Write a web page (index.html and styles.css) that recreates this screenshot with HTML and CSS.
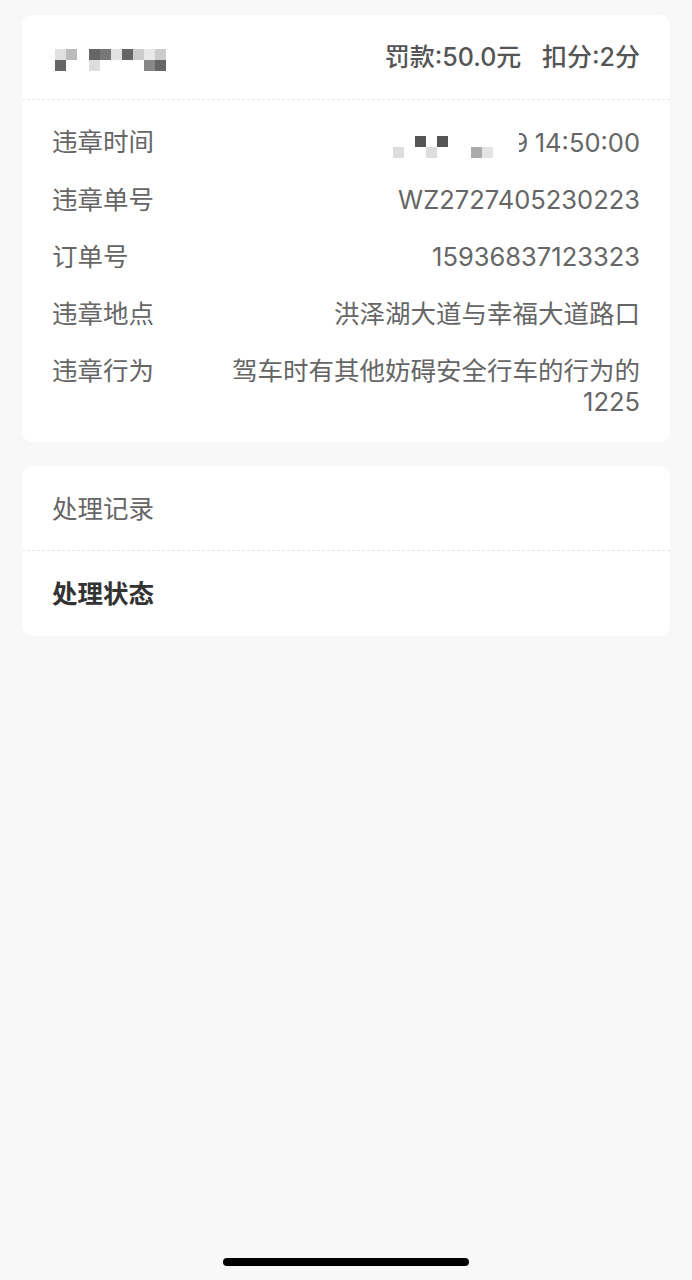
FILE: index.html
```html
<!DOCTYPE html>
<html lang="zh-CN">
<head>
  <meta charset="UTF-8">
  <meta name="viewport" content="width=device-width, initial-scale=1.0">
  <title>违章详情</title>
  <link rel="stylesheet" href="styles.css">
</head>
<body>
  <div class="page">
    <!-- Violation summary -->
    <div class="card">
      <div class="card-head">
        <svg class="mosaic" width="112" height="22" viewBox="0 0 112 22">
          <rect x="0" y="0" width="11" height="11" fill="#e0e0e0"/>
          <rect x="11" y="0" width="11" height="11" fill="#bbb"/>
          <rect x="34" y="0" width="11" height="11" fill="#666"/>
          <rect x="45" y="0" width="11" height="11" fill="#777"/>
          <rect x="56" y="0" width="11" height="11" fill="#e2e2e2"/>
          <rect x="67" y="0" width="11" height="11" fill="#666"/>
          <rect x="78" y="0" width="11" height="11" fill="#ccc"/>
          <rect x="89" y="0" width="11" height="11" fill="#e8e8e8"/>
          <rect x="100" y="0" width="11" height="11" fill="#ccc"/>
          <rect x="0" y="11" width="11" height="11" fill="#666"/>
          <rect x="34" y="11" width="11" height="11" fill="#ddd"/>
          <rect x="89" y="11" width="11" height="11" fill="#888"/>
          <rect x="100" y="11" width="11" height="11" fill="#666"/>
        </svg>
        <div class="penalty">
          <span>罚款:50.0元</span>
          <span class="points">扣分:2分</span>
        </div>
      </div>

      <div class="card-body">
        <div class="row">
          <div class="label">违章时间</div>
          <div class="value time">
            <svg class="mosaic-sm" width="100" height="22" viewBox="0 0 100 22">
              <rect x="22" y="0" width="11" height="11" fill="#555"/>
              <rect x="44" y="0" width="11" height="11" fill="#555"/>
              <rect x="0" y="11" width="11" height="11" fill="#ddd"/>
              <rect x="33" y="11" width="11" height="11" fill="#ddd"/>
              <rect x="78" y="11" width="11" height="11" fill="#aaa"/>
              <rect x="89" y="11" width="11" height="11" fill="#e4e4e4"/>
            </svg>
            <span class="clip"><span>9</span></span>
            <span>&nbsp;14:50:00</span>
          </div>
        </div>
        <div class="row">
          <div class="label">违章单号</div>
          <div class="value">WZ2727405230223</div>
        </div>
        <div class="row">
          <div class="label">订单号</div>
          <div class="value">15936837123323</div>
        </div>
        <div class="row">
          <div class="label">违章地点</div>
          <div class="value">洪泽湖大道与幸福大道路口</div>
        </div>
        <div class="row">
          <div class="label">违章行为</div>
          <div class="value">驾车时有其他妨碍安全行车的行为的1225</div>
        </div>
      </div>
    </div>

    <!-- Processing record -->
    <div class="card">
      <div class="section-title">处理记录</div>
      <div class="section-row">处理状态</div>
    </div>
  </div>

  <div class="home-bar"></div>
</body>
</html>
```

FILE: styles.css
```css
body {
  margin: 0;
  background-color: #f8f8f8;
  font-family: Inter, "Noto Sans CJK SC", sans-serif;
  font-size: 25.5px;
  line-height: 31px;
  color: #666;
}

.page {
  display: flex;
  flex-direction: column;
  gap: 24px;
  padding: 15px 22px;
}

.card {
  background-color: #fff;
  border-radius: 10px;
}

.card-head {
  display: flex;
  justify-content: space-between;
  align-items: center;
  padding: 27px 30px 26px;
  border-bottom: 1px dashed #e6e6e6;
}

.mosaic {
  display: block;
  margin-left: 3px;
  margin-top: 4px;
}

.penalty {
  color: #555;
  font-weight: 500;
  font-size: 25px;
}

.points {
  margin-left: 14px;
}

.card-body {
  padding: 13px 30px 12px;
}

.row {
  display: flex;
  padding: 13px 0;
}

.label {
  width: 160px;
  flex-shrink: 0;
}

.value {
  flex: 1;
  text-align: right;
}

.time {
  display: flex;
  justify-content: flex-end;
  align-items: center;
}

.mosaic-sm {
  display: block;
  margin-top: 10px;
  margin-right: 26px;
}

.clip {
  display: inline-block;
  width: 9px;
  overflow: hidden;
}

.clip span {
  display: inline-block;
  margin-left: -6px;
}

.section-title {
  padding: 27px 30px 26px;
  border-bottom: 1px dashed #e6e6e6;
}

.section-row {
  padding: 27px 30px;
  color: #333;
  font-weight: 700;
}

.home-bar {
  position: fixed;
  left: 50%;
  bottom: 14px;
  width: 246px;
  height: 8px;
  margin-left: -123px;
  border-radius: 4px;
  background-color: #000;
}
```
